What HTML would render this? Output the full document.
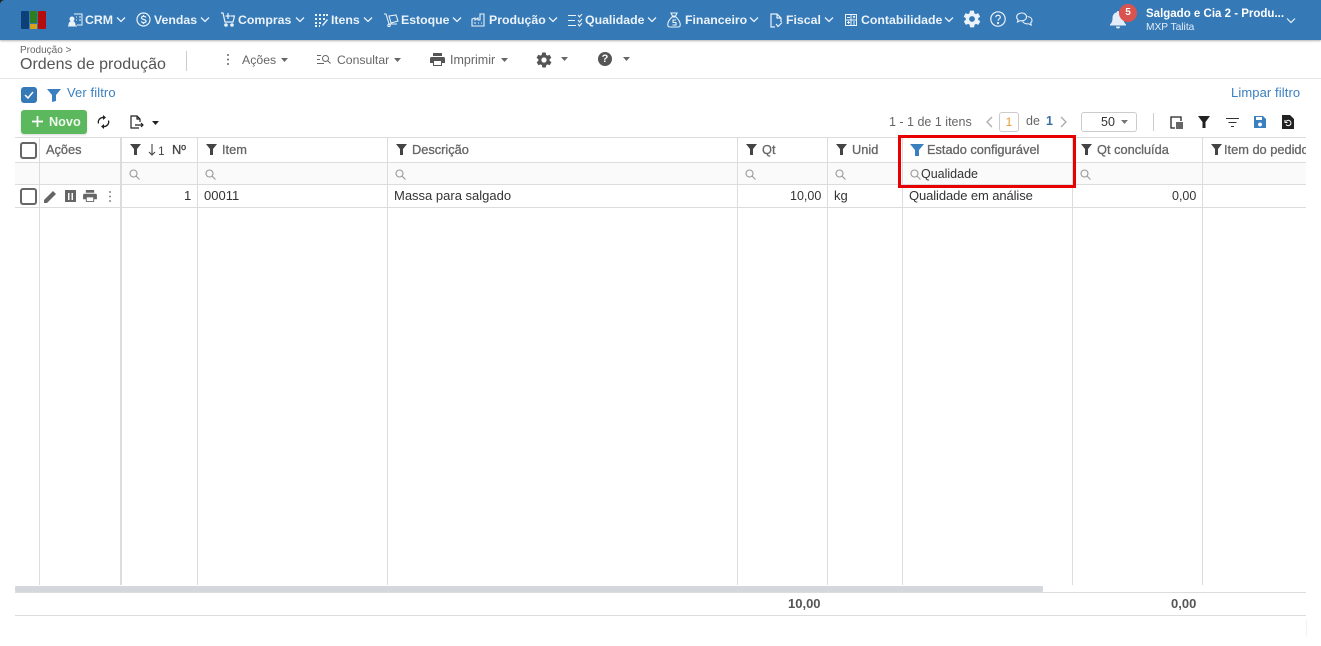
<!DOCTYPE html>
<html lang="pt-BR"><head><meta charset="utf-8"><title>Ordens de produção</title>
<style>
html,body{margin:0;padding:0;width:1321px;height:646px;overflow:hidden;background:#fff;font-family:"Liberation Sans",Arial,sans-serif;color:#333}
.a,.t,svg{position:absolute}
.t{white-space:nowrap;font-size:13px;line-height:16px}
.n{color:#eaf2fa;font-weight:bold;font-size:12.3px;top:12px}
.g{color:#666}
.h{color:#666;font-size:12.8px;top:142px;-webkit-text-stroke:.3px #666}
.r{top:188px;color:#333}
.v{position:absolute;width:1px;background:#dcdcdc;top:138px;height:447px}
.l{position:absolute;left:15px;width:1291px;height:1px;background:#dcdcdc}
.cb{position:absolute;width:13px;height:13px;border:2px solid #666;border-radius:3px;left:20px}
</style></head><body>
<div class="a" style="left:0;top:0;width:1321px;height:40px;background:#3579b6;box-shadow:0 1px 2px rgba(0,0,0,.3)"></div>
<svg style="left:0;top:0" width="5" height="5" fill="#222"><path d="M0 0h5C2 0 0 2 0 5z"/></svg>
<div class="a" style="left:21px;top:11px;width:8px;height:18px;background:#0d3f78;border-radius:1px"></div>
<div class="a" style="left:30px;top:11px;width:7px;height:12px;background:#2e7d1e"></div>
<div class="a" style="left:30px;top:24px;width:7px;height:5px;background:#d9a019"></div>
<div class="a" style="left:38px;top:11px;width:8px;height:18px;background:#b40d0d;border-radius:1px"></div>

<svg style="left:68px;top:13px" width="15" height="14" viewBox="0 0 15 14" fill="none" stroke="#eaf2fa"><path d="M6 1h8v11H9M8 4h1M11 4h2M8 7h1M11 7h2"/><circle cx="4" cy="6" r="2" fill="#eaf2fa"/><path d="M1 12c0-5 6-5 6 0zM0 13h9" fill="#eaf2fa"/></svg>
<span class="t n" style="left:85px">CRM</span>
<svg style="left:136px;top:12px" width="15" height="15" viewBox="0 0 15 15" fill="none" stroke="#eaf2fa" stroke-width="1.2"><circle cx="7.500" cy="7.500" r="6.500"/><path d="M10 5.500C9 3.800 5.500 4 5.500 5.800c0 2.200 4.500 1.200 4.500 3.400 0 1.800-3.500 2-4.700.3M7.500 3v1.500M7.500 10.500V12"/></svg>
<span class="t n" style="left:154px">Vendas</span>
<svg style="left:221px;top:12px" width="14" height="15" viewBox="0 0 14 15" fill="none" stroke="#eaf2fa" stroke-width="1.200"><path d="M0 1h2l2 9h8l1.500-6H10M7 1v6M4.500 4h5"/><circle cx="5" cy="13" r="1.200" fill="#eaf2fa"/><circle cx="11" cy="13" r="1.200" fill="#eaf2fa"/></svg>
<span class="t n" style="left:238px">Compras</span>
<svg style="left:315px;top:14px" width="13" height="13" viewBox="0 0 13 13" fill="#eaf2fa"><path d="M0 0h2v2H0zM4 0h2v2H4zM8 0h2v2H8zM11 0h2v2h-2zM0 4h2v2H0zM4 4h2v2H4zM8 4h2v2H8zM0 8h2v2H0zM4 8h2v2H4zM0 11h2v2H0zM4 11h1v2H4zM7 11l5-6 1 1-5 6z"/></svg>
<span class="t n" style="left:331px">Itens</span>
<svg style="left:384px;top:13px" width="15" height="14" viewBox="0 0 15 14" fill="none" stroke="#eaf2fa" stroke-width="1.100"><path d="M0 1h2l3 10h8"/><path d="M5 3l7-1 2 6-7 2z"/><circle cx="5" cy="12.500" r="1.200"/></svg>
<span class="t n" style="left:401px">Estoque</span>
<svg style="left:471px;top:13px" width="15" height="14" viewBox="0 0 15 14" fill="none" stroke="#eaf2fa" stroke-width="1.100"><path d="M1 13V6l3-1v2l3-2v2h2V1h4v12zM3 10h2M7 10h1M10 10h1"/></svg>
<span class="t n" style="left:489px">Produção</span>
<svg style="left:568px;top:14px" width="15" height="13" viewBox="0 0 15 13" fill="none" stroke="#eaf2fa" stroke-width="1.100"><path d="M0 1.500h8M0 6.500h7M0 11.500h8M10 1l1.500 2L14 0M10 6l1.500 2L14 5M10 10l1.500 2L14 9"/></svg>
<span class="t n" style="left:585px">Qualidade</span>
<svg style="left:667px;top:12px" width="14" height="16" viewBox="0 0 14 16" fill="none" stroke="#eaf2fa" stroke-width="1.100"><path d="M4 1h6L8.500 4h-3zM5 5h4c3 3 5 6 4 9-.3 1-1 1-2 1H3c-1 0-1.700 0-2-1C0 11 2 8 5 5z"/><path d="M9 8H6v2.500h3V13H5.500"/></svg>
<span class="t n" style="left:685px">Financeiro</span>
<svg style="left:770px;top:13px" width="13" height="15" viewBox="0 0 13 15" fill="none" stroke="#eaf2fa" stroke-width="1.200"><path d="M5 14H1V1h6l4 4v4M7 1v4h4M6 11l2 2.500 4-4"/></svg>
<span class="t n" style="left:786px">Fiscal</span>
<svg style="left:845px;top:14px" width="12" height="12" viewBox="0 0 12 12" fill="none" stroke="#eaf2fa"><path d="M.5.500h11v11H.500zM.5 6h11M6 .500v11M2 3.500h3M8 2l2 2M10 2L8 4M2 8.500h3M3.500 7v3M8 8h2M8 10h2"/></svg>
<span class="t n" style="left:861px">Contabilidade</span>
<svg style="left:116px;top:16px" width="10" height="7" viewBox="0 0 10 7" fill="none" stroke="#eaf2fa" stroke-width="1.300"><path d="M1 1.500L5 5.500 9 1.500"/></svg>
<svg style="left:200px;top:16px" width="10" height="7" viewBox="0 0 10 7" fill="none" stroke="#eaf2fa" stroke-width="1.300"><path d="M1 1.500L5 5.500 9 1.500"/></svg>
<svg style="left:295px;top:16px" width="10" height="7" viewBox="0 0 10 7" fill="none" stroke="#eaf2fa" stroke-width="1.300"><path d="M1 1.500L5 5.500 9 1.500"/></svg>
<svg style="left:363px;top:16px" width="10" height="7" viewBox="0 0 10 7" fill="none" stroke="#eaf2fa" stroke-width="1.300"><path d="M1 1.500L5 5.500 9 1.500"/></svg>
<svg style="left:452px;top:16px" width="10" height="7" viewBox="0 0 10 7" fill="none" stroke="#eaf2fa" stroke-width="1.300"><path d="M1 1.500L5 5.500 9 1.500"/></svg>
<svg style="left:548px;top:16px" width="10" height="7" viewBox="0 0 10 7" fill="none" stroke="#eaf2fa" stroke-width="1.300"><path d="M1 1.500L5 5.500 9 1.500"/></svg>
<svg style="left:647px;top:16px" width="10" height="7" viewBox="0 0 10 7" fill="none" stroke="#eaf2fa" stroke-width="1.300"><path d="M1 1.500L5 5.500 9 1.500"/></svg>
<svg style="left:749px;top:16px" width="10" height="7" viewBox="0 0 10 7" fill="none" stroke="#eaf2fa" stroke-width="1.300"><path d="M1 1.500L5 5.500 9 1.500"/></svg>
<svg style="left:824px;top:16px" width="10" height="7" viewBox="0 0 10 7" fill="none" stroke="#eaf2fa" stroke-width="1.300"><path d="M1 1.500L5 5.500 9 1.500"/></svg>
<svg style="left:944px;top:16px" width="10" height="7" viewBox="0 0 10 7" fill="none" stroke="#eaf2fa" stroke-width="1.300"><path d="M1 1.500L5 5.500 9 1.500"/></svg>
<svg style="left:962px;top:9px" width="20" height="20" viewBox="0 0 24 24" fill="#eaf2fa"><path d="M19.400 13c.1-.3.100-.7.100-1s0-.7-.1-1l2.100-1.600c.2-.2.200-.4.100-.6l-2-3.500c-.1-.2-.4-.3-.6-.2l-2.500 1c-.5-.4-1.100-.7-1.700-1l-.4-2.600c0-.3-.2-.5-.5-.5h-4c-.3 0-.5.200-.5.500l-.4 2.600c-.6.300-1.200.6-1.700 1l-2.500-1c-.2-.1-.5 0-.6.200l-2 3.500c-.1.200-.1.400.1.600L4.600 11c-.1.300-.1.700-.1 1s0 .7.100 1l-2.100 1.600c-.2.200-.2.400-.1.600l2 3.500c.1.200.4.300.6.200l2.500-1c.5.400 1.100.7 1.700 1l.4 2.600c0 .3.200.5.500.5h4c.3 0 .5-.2.500-.5l.4-2.600c.6-.3 1.200-.6 1.700-1l2.500 1c.2.100.5 0 .6-.2l2-3.500c.1-.2.100-.4-.1-.6zM12 15.500a3.500 3.500 0 1 1 0-7 3.500 3.500 0 0 1 0 7z"/></svg>
<svg style="left:990px;top:11px" width="16" height="16" viewBox="0 0 16 16" fill="none" stroke="#eaf2fa" stroke-width="1.200"><circle cx="8" cy="8" r="7.200"/><path d="M5.800 6.200C5.800 3.600 10.300 3.600 10.300 6.200c0 1.800-2.300 1.700-2.300 3.500"/><circle cx="8" cy="12" r=".5"/></svg>
<svg style="left:1016px;top:12px" width="17" height="14" viewBox="0 0 17 14" fill="none" stroke="#eaf2fa" stroke-width="1.100"><path d="M6 1C3 1 .6 2.500.6 5c0 1.200.6 2 1.400 2.700L1.500 10l2.500-1.300c2.500.5 6.500-.5 6.500-3.700C10.500 2.500 8.500 1 6 1z"/><path d="M11.500 4.500c2.500.3 4.500 1.700 4.500 3.800 0 1.100-.5 2-1.300 2.500l.5 2.200-2.600-1.200c-2 .3-5-.3-6-2.500"/></svg>
<svg style="left:1109px;top:10px" width="18" height="20" viewBox="0 0 18 20" fill="#e4edf7"><path d="M9 1c.8 0 1.200.6 1.200 1.300C13 3 14.500 5.300 14.500 8c0 3.500 1 5 2.500 6.500v1H1v-1C2.500 13 3.500 11.500 3.500 8c0-2.700 1.500-5 4.300-5.700C7.800 1.600 8.200 1 9 1zM7 16.500h4a2 2 0 0 1-4 0z"/></svg>
<div class="a" style="left:1119px;top:4px;width:18px;height:18px;background:#d9534f;border-radius:50%;color:#fff;font:bold 10px/18px 'Liberation Sans',sans-serif;text-align:center">5</div>
<span class="t" style="left:1146px;top:6px;color:#fff;font-weight:bold;font-size:11.5px">Salgado e Cia 2 - Produ...</span>
<span class="t" style="left:1146px;top:20px;color:#e4edf7;font-size:10.2px">MXP Talita</span>
<svg style="left:1286px;top:17px" width="10" height="7" viewBox="0 0 10 7" fill="none" stroke="#eaf2fa" stroke-width="1.200"><path d="M1 1.500L5 5.500 9 1.500"/></svg>

<span class="t g" style="left:20px;top:44px;font-size:10px;line-height:14px">Produção &gt;</span>
<span class="t" style="left:20px;top:55px;font-size:16px;line-height:19px;color:#555">Ordens de produção</span>
<div class="a" style="left:186px;top:51px;width:1px;height:20px;background:#ccc"></div>
<svg style="left:226px;top:53px" width="4" height="13" fill="#666"><circle cx="2" cy="2" r="1"/><circle cx="2" cy="6.500" r="1"/><circle cx="2" cy="11" r="1"/></svg>
<span class="t g" style="left:242px;top:52px;font-size:12.3px">Ações</span>
<svg style="left:281px;top:58px" width="7" height="4" fill="#666"><path d="M0 0h7L3.500 4z"/></svg>
<svg style="left:317px;top:54px" width="14" height="11" viewBox="0 0 14 11" fill="none" stroke="#666"><path d="M0 1.500h4M0 5.500h3M0 9.500h7"/><circle cx="8.500" cy="4.500" r="3"/><path d="M11 7l2.500 2.500"/></svg>
<span class="t g" style="left:337px;top:52px;font-size:12.2px">Consultar</span>
<svg style="left:394px;top:58px" width="7" height="4" fill="#666"><path d="M0 0h7L3.500 4z"/></svg>
<svg style="left:430px;top:53px" width="15" height="13" viewBox="0 0 15 13" fill="#555"><path d="M3 0h9v3H3zM1.500 4h12c.8 0 1.500.7 1.500 1.500V10h-3v3H3v-3H0V5.500C0 4.700.7 4 1.500 4zM4 8v4h7V8z"/></svg>
<span class="t g" style="left:450px;top:52px;font-size:12.500px">Imprimir</span>
<svg style="left:501px;top:58px" width="7" height="4" fill="#666"><path d="M0 0h7L3.500 4z"/></svg>
<svg style="left:535px;top:51px" width="18" height="18" viewBox="0 0 24 24" fill="#555"><path d="M19.400 13c.1-.3.100-.7.100-1s0-.7-.1-1l2.100-1.600c.2-.2.200-.4.100-.6l-2-3.500c-.1-.2-.4-.3-.6-.2l-2.500 1c-.5-.4-1.100-.7-1.700-1l-.4-2.600c0-.3-.2-.5-.5-.5h-4c-.3 0-.5.200-.5.500l-.4 2.600c-.6.300-1.200.6-1.700 1l-2.500-1c-.2-.1-.5 0-.6.200l-2 3.500c-.1.200-.1.400.1.600L4.600 11c-.1.300-.1.700-.1 1s0 .7.100 1l-2.100 1.600c-.2.200-.2.400-.1.600l2 3.500c.1.200.4.300.6.200l2.500-1c.5.400 1.100.7 1.700 1l.4 2.600c0 .3.200.5.500.5h4c.3 0 .5-.2.500-.5l.4-2.600c.6-.3 1.200-.6 1.700-1l2.500 1c.2.100.5 0 .6-.2l2-3.500c.1-.2.100-.4-.1-.6zM12 15.500a3.500 3.500 0 1 1 0-7 3.500 3.500 0 0 1 0 7z"/></svg>
<svg style="left:561px;top:57px" width="7" height="4" fill="#666"><path d="M0 0h7L3.500 4z"/></svg>
<div class="a" style="left:598px;top:52px;width:14px;height:14px;border-radius:50%;background:#555;color:#fff;font:bold 11px/14px 'Liberation Sans',sans-serif;text-align:center">?</div>
<svg style="left:623px;top:57px" width="7" height="4" fill="#666"><path d="M0 0h7L3.500 4z"/></svg>
<div class="a" style="left:0;top:78px;width:1321px;height:1px;background:#e6e6e6"></div>

<div class="a" style="left:21px;top:87px;width:16px;height:16px;border-radius:3px;background:#3579b6"></div>
<svg style="left:24px;top:91px" width="10" height="8" fill="none" stroke="#fff" stroke-width="1.500"><path d="M1 4l3 3 5-6"/></svg>
<svg style="left:47px;top:89px" width="14" height="13" fill="#3a80c0"><path d="M0 0h14L9 6v6l-4 1V6z"/></svg>
<span class="t" style="left:67px;top:85px;color:#3a80c0;font-size:13px;letter-spacing:.1px">Ver filtro</span>
<span class="t" style="left:1231px;top:85px;color:#3a80c0;font-size:13px;letter-spacing:.1px">Limpar filtro</span>

<div class="a" style="left:21px;top:110px;width:66px;height:24px;border-radius:3px;background:#5cb85c;box-shadow:0 1px 2px rgba(0,0,0,.15)"></div>
<svg style="left:32px;top:116px" width="11" height="11" stroke="#fff" stroke-width="1.700"><path d="M5.500 0v11M0 5.500h11"/></svg>
<span class="t" style="left:49px;top:114px;color:#eef8ee;font-weight:bold;font-size:12.7px">Novo</span>
<svg style="left:97px;top:115px" width="13" height="14" viewBox="0 0 13 14" fill="none" stroke="#222" stroke-width="1.300"><path d="M1.500 8.500C.5 5 3.500 2 7 2.500M11.500 5.500c1 3.500-2 6.500-5.500 6"/><path d="M6 0l3 2.500L6 5zM7 9l-3 2.500L7 14z" fill="#222" stroke="none"/></svg>
<svg style="left:130px;top:115px" width="14" height="14" viewBox="0 0 14 14" fill="none" stroke="#222" stroke-width="1.200"><path d="M9 13H1V1h6l3 3v3M7 1v3h3M5 10h8M11 8l2 2-2 2"/></svg>
<svg style="left:152px;top:121px" width="7" height="4" fill="#222"><path d="M0 0h7L3.500 4z"/></svg>

<span class="t g" style="left:889px;top:114px;font-size:12.500px">1 - 1 de 1 itens</span>
<svg style="left:985px;top:116px" width="8" height="12" fill="none" stroke="#aaa" stroke-width="1.300"><path d="M7 1L2 6l5 5"/></svg>
<div class="a" style="left:999px;top:112px;width:18px;height:18px;border:1px solid #ccc;border-radius:3px;color:#e79a2d;font-size:12px;line-height:18px;text-align:center">1</div>
<span class="t g" style="left:1026px;top:113px;font-size:12.500px">de</span>
<span class="t" style="left:1046px;top:113px;color:#3a6ea5;font-weight:bold;font-size:12.500px">1</span>
<svg style="left:1060px;top:116px" width="8" height="12" fill="none" stroke="#aaa" stroke-width="1.300"><path d="M1 1l5 5-5 5"/></svg>
<div class="a" style="left:1081px;top:112px;width:54px;height:18px;border:1px solid #ccc;border-radius:3px"></div>
<span class="t" style="left:1101px;top:114px;font-size:12.500px">50</span>
<svg style="left:1121px;top:120px" width="7" height="4" fill="#777"><path d="M0 0h7L3.500 4z"/></svg>
<div class="a" style="left:1153px;top:113px;width:1px;height:18px;background:#ccc"></div>
<svg style="left:1170px;top:116px" width="14" height="14" viewBox="0 0 14 14"><path d="M11 5V1H1v11h4" fill="none" stroke="#222" stroke-width="1.300"/><path d="M6 6h7v7H6z" fill="#666"/></svg>
<svg style="left:1198px;top:116px" width="12" height="12" fill="#222"><path d="M0 0h12L7.500 6v6h-3V6z"/></svg>
<svg style="left:1226px;top:117px" width="13" height="11" stroke="#333"><path d="M0 1.500h13M2.500 5.500h8M5 9.500h3"/></svg>
<svg style="left:1254px;top:116px" width="12" height="12" fill="#3a80c0"><path fill-rule="evenodd" d="M0 0h9l3 3v9H0zM2 1v3h6V1zM6 6.500a2 2 0 1 0 .1 0z"/></svg>
<svg style="left:1282px;top:115px" width="12" height="14" viewBox="0 0 12 14"><path d="M0 0h8l4 4v10H0z" fill="#222"/><path d="M4 6.500A2.700 2.700 0 1 1 4 9.500M3 5v2.500h2.500" fill="none" stroke="#fff"/></svg>

<div class="a" style="left:15px;top:163px;width:1291px;height:21px;background:#fafafa"></div>
<div class="l" style="top:137px"></div>
<div class="l" style="top:162px"></div>
<div class="l" style="top:184px"></div>
<div class="l" style="top:207px"></div>
<div class="v" style="left:39px"></div>
<div class="v" style="left:120px;width:2px"></div>
<div class="v" style="left:197px"></div>
<div class="v" style="left:387px"></div>
<div class="v" style="left:737px"></div>
<div class="v" style="left:827px"></div>
<div class="v" style="left:902px"></div>
<div class="v" style="left:1072px"></div>
<div class="v" style="left:1202px"></div>

<div class="cb" style="top:142px"></div>
<span class="t h" style="left:46px">Ações</span>
<svg style="left:130px;top:144px" width="11" height="11" fill="#444"><path d="M0 0h11L7 5v6H4V5z"/></svg>
<svg style="left:148px;top:144px" width="8" height="12" fill="none" stroke="#444" stroke-width="1.100"><path d="M4 0v11M1 8l3 3 3-3"/></svg>
<span class="t" style="left:158px;top:143px;color:#444;font-size:12px">1</span>
<span class="t h" style="left:172px;color:#444;-webkit-text-stroke:.3px #444">Nº</span>
<svg style="left:206px;top:144px" width="11" height="11" fill="#444"><path d="M0 0h11L7 5v6H4V5z"/></svg>
<span class="t h" style="left:222px">Item</span>
<svg style="left:396px;top:144px" width="11" height="11" fill="#444"><path d="M0 0h11L7 5v6H4V5z"/></svg>
<span class="t h" style="left:412px">Descrição</span>
<svg style="left:746px;top:144px" width="11" height="11" fill="#444"><path d="M0 0h11L7 5v6H4V5z"/></svg>
<span class="t h" style="left:762px">Qt</span>
<svg style="left:836px;top:144px" width="11" height="11" fill="#444"><path d="M0 0h11L7 5v6H4V5z"/></svg>
<span class="t h" style="left:852px">Unid</span>
<svg style="left:910px;top:144px" width="14" height="12" fill="#3a80c0"><path d="M0 0h14L9 6v6l-4 0V6z"/></svg>
<span class="t h" style="left:927px">Estado configurável</span>
<svg style="left:1081px;top:144px" width="11" height="11" fill="#444"><path d="M0 0h11L7 5v6H4V5z"/></svg>
<span class="t h" style="left:1097px">Qt concluída</span>
<svg style="left:1211px;top:144px" width="11" height="11" fill="#444"><path d="M0 0h11L7 5v6H4V5z"/></svg>
<div class="a" style="left:1224px;top:138px;width:82px;height:24px;overflow:hidden"><span class="t h" style="left:0;top:4px">Item do pedido</span></div>

<svg style="left:129px;top:169px" width="11" height="11" fill="none" stroke="#999" stroke-width="1.100"><circle cx="4.500" cy="4.500" r="3.500"/><path d="M7 7l3.500 3.500"/></svg>
<svg style="left:205px;top:169px" width="11" height="11" fill="none" stroke="#999" stroke-width="1.100"><circle cx="4.500" cy="4.500" r="3.500"/><path d="M7 7l3.500 3.500"/></svg>
<svg style="left:395px;top:169px" width="11" height="11" fill="none" stroke="#999" stroke-width="1.100"><circle cx="4.500" cy="4.500" r="3.500"/><path d="M7 7l3.500 3.500"/></svg>
<svg style="left:745px;top:169px" width="11" height="11" fill="none" stroke="#999" stroke-width="1.100"><circle cx="4.500" cy="4.500" r="3.500"/><path d="M7 7l3.500 3.500"/></svg>
<svg style="left:835px;top:169px" width="11" height="11" fill="none" stroke="#999" stroke-width="1.100"><circle cx="4.500" cy="4.500" r="3.500"/><path d="M7 7l3.500 3.500"/></svg>
<svg style="left:910px;top:169px" width="11" height="11" fill="none" stroke="#999" stroke-width="1.100"><circle cx="4.500" cy="4.500" r="3.500"/><path d="M7 7l3.500 3.500"/></svg>
<span class="t" style="left:921px;top:166px;color:#333;font-size:12.500px">Qualidade</span>
<svg style="left:1080px;top:169px" width="11" height="11" fill="none" stroke="#999" stroke-width="1.100"><circle cx="4.500" cy="4.500" r="3.500"/><path d="M7 7l3.500 3.500"/></svg>

<div class="cb" style="top:188px"></div>
<svg style="left:44px;top:190px" width="13" height="13" fill="#666"><path d="M0 13V10L9 1l3 3-9 9z"/></svg>
<svg style="left:65px;top:190px" width="11" height="12" viewBox="0 0 11 12" fill="#666"><path d="M0 0h11v12H0zM3 3v7h1.500V3zM6.500 3v7H8V3z" fill-rule="evenodd"/></svg>
<svg style="left:83px;top:190px" width="14" height="12" viewBox="0 0 15 13" fill="#666"><path d="M3 0h9v3H3zM1.500 4h12c.8 0 1.500.7 1.500 1.500V10h-3v3H3v-3H0V5.500C0 4.700.7 4 1.500 4zM4 8v4h7V8z"/></svg>
<svg style="left:108px;top:190px" width="4" height="13" fill="#888"><circle cx="2" cy="2" r="1"/><circle cx="2" cy="6.500" r="1"/><circle cx="2" cy="11" r="1"/></svg>
<span class="t r" style="left:184px">1</span>
<span class="t r" style="left:204px">00011</span>
<span class="t r" style="left:394px">Massa para salgado</span>
<span class="t r" style="left:790px;font-size:12.5px">10,00</span>
<span class="t r" style="left:834px">kg</span>
<span class="t r" style="left:909px;letter-spacing:-.1px">Qualidade em análise</span>
<span class="t r" style="left:1172px;font-size:12.5px">0,00</span>

<div class="a" style="left:898px;top:135px;width:172px;height:47px;border:3px solid #e80000"></div>

<div class="a" style="left:15px;top:586px;width:1028px;height:6px;background:#d4d8dc;border-radius:1px"></div>
<div class="l" style="top:592px"></div>
<div class="l" style="top:615px"></div>
<span class="t" style="left:788px;top:596px;color:#555;font-weight:bold">10,00</span>
<span class="t" style="left:1171px;top:596px;color:#555;font-weight:bold">0,00</span>
<div class="a" style="left:1306px;top:620px;width:1px;height:16px;background:#f2f2f2"></div>
</body></html>
